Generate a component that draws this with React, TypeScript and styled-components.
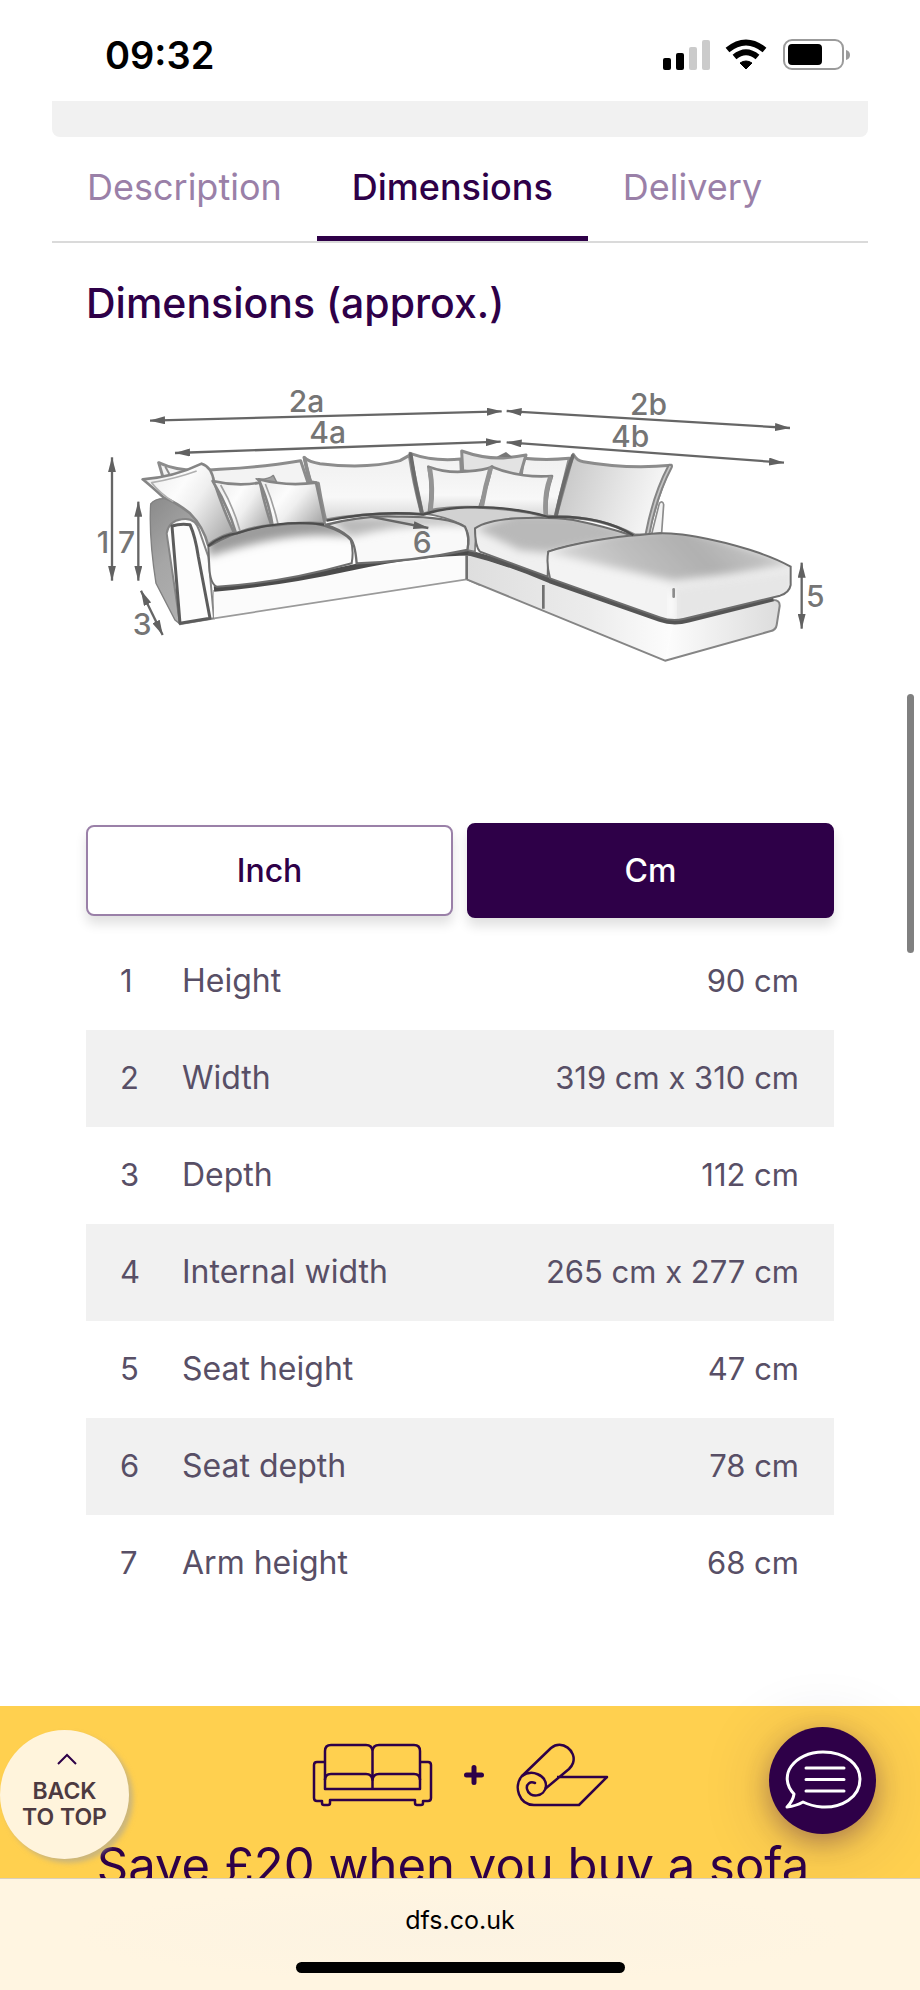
import React, { useState } from "react";
import styled, { createGlobalStyle } from "styled-components";

const color = {
  ink: "#2e0048",
  muted: "#9a80a8",
  body: "#584f66",
  band: "#f1f1f1",
  line: "#dadada",
  yellow: "#ffd04f",
  cream: "#fff4dc",
};

const GlobalStyle = createGlobalStyle`
  * { box-sizing: border-box; }
  body {
    margin: 0;
    background: #fff;
    font-family: Inter, "Liberation Sans", sans-serif;
    color: ${color.body};
  }
  button { font-family: inherit; cursor: pointer; }
`;

const Screen = styled.div`
  display: flex;
  flex-direction: column;
  height: 100vh;
  overflow: hidden;
  background: #fff;
`;

const StatusBar = styled.header`
  display: flex;
  flex: none;
  align-items: center;
  justify-content: space-between;
  height: 101px;
  padding: 8px 68px 0 105px;
`;

const Clock = styled.time`
  font-size: 38px;
  line-height: 48px;
  font-weight: 600;
  color: #000;
`;

const StatusIcons = styled.svg`
  display: block;
  width: 190px;
  height: 32px;
`;

const Viewport = styled.div`
  position: relative;
  flex: 1;
  min-height: 0;
  overflow: hidden;
`;

const Page = styled.main`
  display: flex;
  flex-direction: column;
  padding: 0 52px;
`;

const CardEnd = styled.div`
  height: 36px;
  border-radius: 0 0 8px 8px;
  background: ${color.band};
`;

const Tabs = styled.div`
  display: flex;
  border-bottom: 2px solid ${color.line};
`;

const Tab = styled.button<{ $active: boolean }>`
  height: 104px;
  padding: 0 35px;
  border: 0;
  border-bottom: 5px solid ${(p) => (p.$active ? color.ink : "transparent")};
  background: none;
  color: ${(p) => (p.$active ? color.ink : color.muted)};
  font-size: 36px;
  font-weight: ${(p) => (p.$active ? 500 : 400)};
`;

const Panel = styled.section`
  padding: 32px 34px 94px;
`;

const Title = styled.h2`
  margin: 0;
  color: ${color.ink};
  font-size: 41px;
  line-height: 56px;
  font-weight: 500;
`;

const Drawing = styled.svg`
  display: block;
  width: 100%;
  height: auto;
  margin: 39px 0 143px;
`;

const Units = styled.div`
  display: flex;
  align-items: center;
  gap: 14px;
  margin-bottom: 15px;
`;

const UnitButton = styled.button<{ $active: boolean }>`
  flex: 1;
  height: ${(p) => (p.$active ? 95 : 91)}px;
  padding: 0;
  border: 2px solid ${(p) => (p.$active ? color.ink : color.muted)};
  border-radius: 8px;
  background: ${(p) => (p.$active ? color.ink : "#fff")};
  color: ${(p) => (p.$active ? "#fff" : color.ink)};
  font-size: 32px;
  font-weight: 500;
  box-shadow: 0 8px 12px rgba(0, 0, 0, 0.12);
`;

const Sizes = styled.table`
  width: 100%;
  border-collapse: collapse;
  font-size: 31px;
  line-height: 40px;
`;

const Row = styled.tr`
  height: 97px;
  &:nth-child(even) { background: ${color.band}; }
`;

const Index = styled.td`
  width: 96px;
  padding: 0 0 2px 34px;
`;

const Name = styled.th`
  padding: 0 0 2px;
  text-align: left;
  font-size: 32px;
  font-weight: 400;
`;

const Value = styled.td`
  padding: 0 35px 2px 0;
  text-align: right;
`;

const Banner = styled.section`
  display: flex;
  flex-direction: column;
  align-items: center;
  gap: 30px;
  padding: 37px 20px 60px;
  background: ${color.yellow};
  color: ${color.ink};
`;

const BannerIcons = styled.svg`
  display: block;
  width: 300px;
  height: 64px;
`;

const BannerTitle = styled.h3`
  margin: 0;
  padding-right: 14px;
  font-size: 49px;
  line-height: 58px;
  font-weight: 400;
  white-space: nowrap;
`;

const ScrollThumb = styled.div`
  position: absolute;
  top: 593px;
  right: 6px;
  width: 7px;
  height: 259px;
  border-radius: 4px;
  background: #808080;
`;

const BackToTop = styled.button`
  position: absolute;
  left: 0;
  bottom: 19px;
  display: flex;
  flex-direction: column;
  align-items: center;
  width: 129px;
  height: 129px;
  padding: 23px 0 0;
  border: 0;
  border-radius: 50%;
  background: ${color.cream};
  color: #4d3a40;
  font-size: 23px;
  line-height: 26px;
  font-weight: 600;
  box-shadow: 4px 4px 5px rgba(160, 160, 160, 0.55);
`;

const Chevron = styled.svg`
  flex: none;
  width: 20px;
  height: 13px;
  margin: 0 0 12px 4px;
`;

const Chat = styled.button`
  position: absolute;
  right: 44px;
  bottom: 44px;
  width: 107px;
  height: 107px;
  padding: 0;
  border: 0;
  border-radius: 50%;
  background: ${color.ink};
  box-shadow: 0 8px 24px rgba(46, 0, 72, 0.3), 0 8px 70px rgba(46, 0, 72, 0.2);
  svg { display: block; width: 107px; height: 107px; }
`;

const AddressBar = styled.footer`
  display: flex;
  flex: none;
  flex-direction: column;
  align-items: center;
  height: 112px;
  padding-top: 24px;
  border-top: 1px solid #d9cfbd;
  background: radial-gradient(ellipse at 50% 50%, #fcf3e2, #fff5e1 60%);
`;

const Address = styled.a`
  color: #000;
  font-size: 25px;
  line-height: 34px;
  text-decoration: none;
`;

const HomeIndicator = styled.div`
  width: 329px;
  height: 11px;
  margin-top: 25px;
  border-radius: 6px;
  background: #000;
`;

type Line = [number, number, number, number];

const spans: Line[] = [
  [210, 152, 1265, 124],
  [285, 249, 1262, 215],
  [1280, 123, 2130, 174],
  [1280, 217, 2112, 278],
  [96, 262, 96, 632],
  [175, 395, 175, 632],
  [183, 662, 248, 795],
  [2165, 578, 2165, 776],
];

const labels: [string, number, number][] = [
  ["2a", 626, 125],
  ["4a", 688, 218],
  ["2b", 1650, 135],
  ["4b", 1593, 230],
  ["1", 50, 550],
  ["7", 114, 550],
  ["3", 158, 795],
  ["6", 998, 550],
  ["5", 2178, 712],
];

const seatLeft =
  "M385 530Q480 475 580 465 670 450 735 468 790 485 812 510 822 540 815 580 600 640 410 650 390 640 388 590Z";
const seatMiddle =
  "M735 465Q850 435 950 440 1100 438 1155 470 1170 500 1162 540 1000 575 830 580 825 515 808 502 775 475 735 465Z";
const seatRight =
  "M1185 475Q1220 450 1310 445 1410 440 1480 450 1580 470 1660 498 1500 515 1405 545L1403 620 1200 545Q1185 530 1185 475Z";
const chaise =
  "M1405 545C1480 520 1600 500 1680 495 1750 485 1800 492 1850 500 1960 520 2070 555 2132 590V645Q2128 668 2100 677L1810 747Q1775 755 1740 742L1410 625Q1398 580 1405 545Z";

function SofaDrawing() {
  return (
    <Drawing viewBox="18 0 2244 930" role="img" aria-label="Corner sofa with numbered measurements">
      <defs>
        <marker id="tip" viewBox="0 0 46 24" refX="45" refY="12" markerWidth="46" markerHeight="24" markerUnits="userSpaceOnUse" orient="auto-start-reverse">
          <path d="M0 0 46 12 0 24Z" fill="#616161" />
        </marker>
        <filter id="soft" x="-5%" y="-5%" width="110%" height="110%">
          <feGaussianBlur stdDeviation="2" />
        </filter>
        <filter id="shade" x="-20%" y="-30%" width="140%" height="160%">
          <feGaussianBlur stdDeviation="13" />
        </filter>
        <clipPath id="clipLeft"><path d={seatLeft} /></clipPath>
        <clipPath id="clipMiddle"><path d={seatMiddle} /></clipPath>
        <clipPath id="clipRight"><path d={seatRight} /></clipPath>
        <clipPath id="clipChaise"><path d={chaise} /></clipPath>
        <linearGradient id="chaiseTop" x1="0" y1="0.6" x2="1" y2="0.4">
          <stop offset="0" stopColor="#d8d8d8" />
          <stop offset="0.35" stopColor="#bdbdbd" />
          <stop offset="0.6" stopColor="#b0b0b0" />
          <stop offset="1" stopColor="#cecece" />
        </linearGradient>
        <linearGradient id="leftFace" x1="0" y1="0" x2="1" y2="0">
          <stop offset="0" stopColor="#dedede" />
          <stop offset="0.6" stopColor="#ececec" />
          <stop offset="1" stopColor="#fdfdfd" />
        </linearGradient>
        <linearGradient id="rightFace" x1="0" y1="0" x2="1" y2="0">
          <stop offset="0" stopColor="#fdfdfd" />
          <stop offset="1" stopColor="#dcdcdc" />
        </linearGradient>
        <linearGradient id="pillow" x1="0" y1="0.2" x2="1" y2="0.8">
          <stop offset="0" stopColor="#eeeeee" />
          <stop offset="0.35" stopColor="#fcfcfc" />
          <stop offset="0.55" stopColor="#efefef" />
          <stop offset="1" stopColor="#ababab" />
        </linearGradient>
        <linearGradient id="pale" x1="0" y1="0" x2="0" y2="1">
          <stop offset="0" stopColor="#f0f0f0" />
          <stop offset="0.65" stopColor="#f8f8f8" />
          <stop offset="1" stopColor="#d6d6d6" />
        </linearGradient>
        <linearGradient id="backRight" x1="0" y1="0.5" x2="0.9" y2="0.7">
          <stop offset="0" stopColor="#c8c8c8" />
          <stop offset="0.6" stopColor="#e6e6e6" />
          <stop offset="1" stopColor="#f8f8f8" />
        </linearGradient>
        <linearGradient id="arm" x1="0" y1="0" x2="0.5" y2="1">
          <stop offset="0" stopColor="#8a8a8a" />
          <stop offset="0.5" stopColor="#a6a6a6" />
          <stop offset="1" stopColor="#b0b0b0" />
        </linearGradient>
      </defs>

      <g filter="url(#soft)">
        <g stroke="#8c8c8c" strokeWidth="9" strokeLinejoin="round">
          <path d="M236 278Q300 310 420 298 560 290 662 272L688 350H400L250 325Z" fill="#f3f3f3" />
          <path d="M256 290 268 312" fill="none" strokeWidth="6" />
          <path d="M990 250Q1060 275 1142 267L1150 425 1028 432Z" fill="url(#pale)" />
          <path d="M1330 265Q1400 272 1468 265L1425 440 1310 430Z" fill="url(#pale)" />
          <path d="M1145 243Q1210 266 1270 264 1310 260 1338 255L1318 322 1148 302Z" fill="#e3e3e3" />
          <path d="M1250 260 1278 246 1298 262Z" fill="#777" stroke="none" />
          <path d="M672 262Q688 276 720 281 860 298 960 272L988 256Q1000 340 1025 432 870 425 737 450 725 400 715 340L692 335Z" fill="url(#pale)" />
          <path d="M1738 400Q1748 390 1751 404L1745 488 1715 492Z" fill="#f3f3f3" strokeWidth="5" />
          <path d="M1480 253Q1490 272 1510 275 1640 298 1774 286 1740 350 1703 495L1665 495Q1560 440 1428 440Z" fill="url(#backRight)" />
        </g>
        <g fill="none" stroke="#6c6c6c" strokeWidth="11" strokeLinecap="round">
          <path d="M1478 258Q1448 340 1428 438" />
          <path d="M1770 290Q1725 375 1703 490" stroke="#858585" strokeWidth="17" />
          <path d="M1770 290Q1725 375 1703 490" stroke="#c4c4c4" strokeWidth="5" />
          <path d="M992 252Q1004 340 1026 430" />
          <path d="M674 264Q684 320 692 338" stroke="#8c8c8c" />
        </g>

        <path d="M212 402Q225 384 258 386L325 420Q362 445 378 482L345 456Q280 440 262 485L300 762 285 750 228 640Q206 500 212 402Z" fill="url(#arm)" stroke="#808080" strokeWidth="4" />
        <path d="M260 490Q266 453 305 448 345 440 358 482L385 560 402 745 300 762Z" fill="#fcfcfc" stroke="#858585" strokeWidth="6" />
        <path d="M276 468Q300 460 330 464 346 500 355 560L390 745 300 760Z" fill="#fdfdfd" stroke="#5c5c5c" strokeWidth="9" strokeLinejoin="round" />
        <path d="M402 660 404 742" stroke="#a0a0a0" strokeWidth="5" />

        <path d="M402 664Q790 610 1160 552V628L402 745Z" fill="#fbfbfb" />
        <path d="M402 745 1160 628 1200 646" fill="none" stroke="#9a9a9a" strokeWidth="5" />
        <path d="M1160 552 1390 628 1780 758 1755 872 1160 628Z" fill="url(#leftFace)" />
        <path d="M1780 758 2080 690Q2100 690 2099 708L2090 765Q2088 780 2070 784L1755 872Z" fill="url(#rightFace)" />
        <path d="M1160 628 1755 872 2070 784Q2088 780 2090 765L2099 708Q2100 690 2080 690" fill="none" stroke="#858585" strokeWidth="6" strokeLinejoin="round" />
        <path d="M402 657Q600 640 810 594T1180 548" fill="none" stroke="#4c4c4c" strokeWidth="17" />
        <path d="M1165 548Q1290 580 1410 632L1740 748Q1780 762 1825 750L2080 686" fill="none" stroke="#555" strokeWidth="16" strokeLinejoin="round" />
        <path d="M1160 555V628M1390 645V716" fill="none" stroke="#707070" strokeWidth="8" />

        <path d="M1030 430Q1100 408 1200 412 1310 415 1405 441 1280 445 1205 468 1185 480 1185 545L1162 540Q1175 490 1148 465 1100 440 1030 430Z" fill="#d2d2d2" stroke="#7a7a7a" strokeWidth="5" />

        <path d={seatLeft} fill="#fdfdfd" />
        <path d="M385 505Q560 420 730 445L850 500 740 496Q600 490 385 560Z" fill="#9c9c9c" clipPath="url(#clipLeft)" filter="url(#shade)" />
        <path d={seatLeft} fill="none" stroke="#6e6e6e" strokeWidth="6" />
        <path d={seatMiddle} fill="#f9f9f9" />
        <path d="M735 440H1160V465Q980 455 810 500Z" fill="#bababa" clipPath="url(#clipMiddle)" filter="url(#shade)" />
        <path d={seatMiddle} fill="none" stroke="#6e6e6e" strokeWidth="7" />
        <path d={seatRight} fill="#f0f0f0" />
        <path d="M1185 475 1310 430 1480 430 1690 498 1405 548 1320 540Z" fill="#b9b9b9" clipPath="url(#clipRight)" filter="url(#shade)" />
        <path d={seatRight} fill="none" stroke="#6e6e6e" strokeWidth="6" />
        <path d={chaise} fill="#f3f3f3" />
        <g clipPath="url(#clipChaise)">
          <path d="M1780 650 2140 600V700L1780 760Z" fill="#e6e6e6" filter="url(#shade)" />
          <path d="M1400 545 1600 490 1800 470 2150 580 1950 612 1780 632 1590 590Z" fill="url(#chaiseTop)" filter="url(#shade)" />
          <path d="M1765 670H1785V750H1765Z" fill="#fff" filter="url(#shade)" />
        </g>
        <path d={chaise} fill="none" stroke="#6e6e6e" strokeWidth="6" />
        <path d="M1781 658V680" stroke="#8c8c8c" strokeWidth="8" strokeLinecap="round" />

        <g stroke="#858585" strokeWidth="8" strokeLinejoin="round">
          <path d="M188 328Q280 322 365 281 395 290 402 335 430 420 462 488 415 500 384 525 370 470 330 430 290 398 250 382 215 350 188 328Z" fill="url(#pillow)" />
          <path d="M280 395Q240 370 215 338 290 325 350 303" fill="none" stroke="#b0b0b0" strokeWidth="5" />
          <path d="M398 333Q470 350 540 338 552 400 574 465 520 470 468 490 445 410 398 333Z" fill="url(#pillow)" />
          <path d="M422 345Q460 410 480 482" fill="none" stroke="#a0a0a0" strokeWidth="5" />
          <path d="M528 326Q560 332 580 316L592 340H545Z" fill="#a0a0a0" strokeWidth="4" />
          <path d="M536 328Q620 350 708 338 722 400 734 460 650 455 578 468 568 400 536 328Z" fill="url(#pillow)" />
          <path d="M556 342Q580 400 594 462" fill="none" stroke="#a0a0a0" strokeWidth="5" />
          <path d="M1045 290Q1100 310 1160 304 1215 300 1237 290 1215 350 1200 412 1110 408 1047 422 1058 350 1045 290Z" fill="url(#pale)" />
          <path d="M1235 290Q1320 325 1416 318 1395 380 1400 440 1300 415 1198 412 1222 350 1235 290Z" fill="url(#pale)" />
        </g>
        <g fill="none" stroke="#949494" strokeWidth="14" strokeLinecap="round">
          <path d="M1050 300Q1060 360 1052 415" />
          <path d="M1231 298Q1215 350 1206 405" />
          <path d="M1410 325Q1393 370 1397 430" />
        </g>
        <path d="M384 528Q425 495 470 490 600 448 732 464M740 452Q900 420 1030 434 1110 405 1240 413 1340 420 1405 441 1560 434 1660 496" fill="none" stroke="#4e4e4e" strokeWidth="7" />
      </g>

      <g stroke="#666" strokeWidth="7">
        {spans.map(([x1, y1, x2, y2]) => (
          <line key={`${x1}-${y1}`} x1={x1} y1={y1} x2={x2} y2={y2} markerStart="url(#tip)" markerEnd="url(#tip)" />
        ))}
        <line x1="870" y1="440" x2="1045" y2="474" markerEnd="url(#tip)" />
      </g>
      <g fill="#757575" fontSize="90" fontWeight="500">
        {labels.map(([text, x, y]) => (
          <text key={text} x={x} y={y}>{text}</text>
        ))}
      </g>
    </Drawing>
  );
}

function PhoneStatus() {
  return (
    <StatusIcons viewBox="662 38 190 32" aria-hidden="true">
      <rect x="663" y="57" width="8" height="12" rx="2" />
      <rect x="676" y="52" width="8" height="17" rx="2" />
      <rect x="689" y="46" width="8" height="23" rx="2" fill="#cbcbcb" />
      <rect x="702" y="39" width="8" height="30" rx="2" fill="#cbcbcb" />
      <path d="M746 68 740 62Q746 58 752 62Z" strokeLinejoin="round" stroke="#000" />
      <path d="M734.500 56Q746 46.500 757.500 56M727.500 49Q746 34 764.500 49" fill="none" stroke="#000" strokeWidth="6" />
      <rect x="784" y="39" width="59" height="29" rx="8" fill="none" stroke="#9b9b9b" strokeWidth="2" />
      <rect x="788" y="43" width="34" height="21" rx="4" />
      <path d="M846 49Q850 50 850 54T846 59Z" fill="#9b9b9b" />
    </StatusIcons>
  );
}

function OfferIcons() {
  return (
    <BannerIcons viewBox="310 1743 300 64" fill="none" stroke={color.ink} strokeWidth="2.500" strokeLinejoin="round" aria-hidden="true">
      <path d="M325 1789V1751Q325 1745 331 1745H366Q372 1745 372.500 1751 373 1745 379 1745H414Q420 1745 420 1751V1789ZM372.500 1751V1789" />
      <path d="M325 1780Q325 1774 331 1774H366Q372 1774 372.500 1780 373 1774 379 1774H414Q420 1774 420 1780" />
      <path d="M325 1762H317Q314 1762 314 1765V1798Q314 1801 317 1801H322V1803Q322 1805 324 1805H328Q330 1805 330 1803V1800H415V1803Q415 1805 417 1805H421Q423 1805 423 1803V1801H428Q431 1801 431 1798V1765Q431 1762 428 1762H420" />
      <path d="M474 1767.500V1782.500M466.500 1775H481.500" strokeWidth="5" strokeLinecap="round" />
      <path d="M557 1777H607L579 1805H534C519 1805 513 1786 522 1776L551 1748C562 1739 577 1751 573 1763Q572 1766 569 1769L545 1789" />
      <path d="M522 1776C532 1769 546 1775 546 1786 545 1797 529 1799 527 1789 526 1784 530 1781 535 1783" strokeLinecap="round" />
    </BannerIcons>
  );
}

const tabNames = ["Description", "Dimensions", "Delivery"];

const measurements: [string, number[]][] = [
  ["Height", [90]],
  ["Width", [319, 310]],
  ["Depth", [112]],
  ["Internal width", [265, 277]],
  ["Seat height", [47]],
  ["Seat depth", [78]],
  ["Arm height", [68]],
];

type Unit = "Inch" | "Cm";

const format = (values: number[], unit: Unit) =>
  values
    .map((v) => (unit === "Cm" ? `${v} cm` : `${Math.round(v / 2.54)} in`))
    .join(" x ");

export default function App() {
  const [tab, setTab] = useState("Dimensions");
  const [unit, setUnit] = useState<Unit>("Cm");

  return (
    <Screen>
      <GlobalStyle />
      <StatusBar>
        <Clock>09:32</Clock>
        <PhoneStatus />
      </StatusBar>

      <Viewport>
        <Page>
          <CardEnd />
          <Tabs role="tablist">
            {tabNames.map((name) => (
              <Tab key={name} role="tab" aria-selected={tab === name} $active={tab === name} onClick={() => setTab(name)}>
                {name}
              </Tab>
            ))}
          </Tabs>
          <Panel>
            <Title>Dimensions (approx.)</Title>
            <SofaDrawing />
            <Units>
              {(["Inch", "Cm"] as Unit[]).map((u) => (
                <UnitButton key={u} $active={unit === u} aria-pressed={unit === u} onClick={() => setUnit(u)}>
                  {u}
                </UnitButton>
              ))}
            </Units>
            <Sizes>
              <tbody>
                {measurements.map(([name, values], i) => (
                  <Row key={name}>
                    <Index>{i + 1}</Index>
                    <Name scope="row">{name}</Name>
                    <Value>{format(values, unit)}</Value>
                  </Row>
                ))}
              </tbody>
            </Sizes>
          </Panel>
        </Page>

        <Banner>
          <OfferIcons />
          <BannerTitle>Save £20 when you buy a sofa</BannerTitle>
        </Banner>

        <ScrollThumb />
        <BackToTop>
          <Chevron viewBox="0 0 20 13" fill="none" stroke={color.ink} strokeWidth="2" aria-hidden="true">
            <path d="M1 11 10 2 19 11" />
          </Chevron>
          <span>BACK</span>
          <span>TO TOP</span>
        </BackToTop>
        <Chat aria-label="Chat">
          <svg viewBox="0 0 107 107" fill="none" stroke="#fff" strokeWidth="3" strokeLinejoin="round" strokeLinecap="round" aria-hidden="true">
            <path d="M25 67C8 49 25 25 54 25 77 25 91 38 91 52 91 71 72 81 53 80Q42 79 34 75 27 79 18 80 24 74 25 67Z" />
            <path d="M37 41H75M37 52.500H75M37 64H75" />
          </svg>
        </Chat>
      </Viewport>

      <AddressBar>
        <Address href="https://dfs.co.uk">dfs.co.uk</Address>
        <HomeIndicator />
      </AddressBar>
    </Screen>
  );
}
